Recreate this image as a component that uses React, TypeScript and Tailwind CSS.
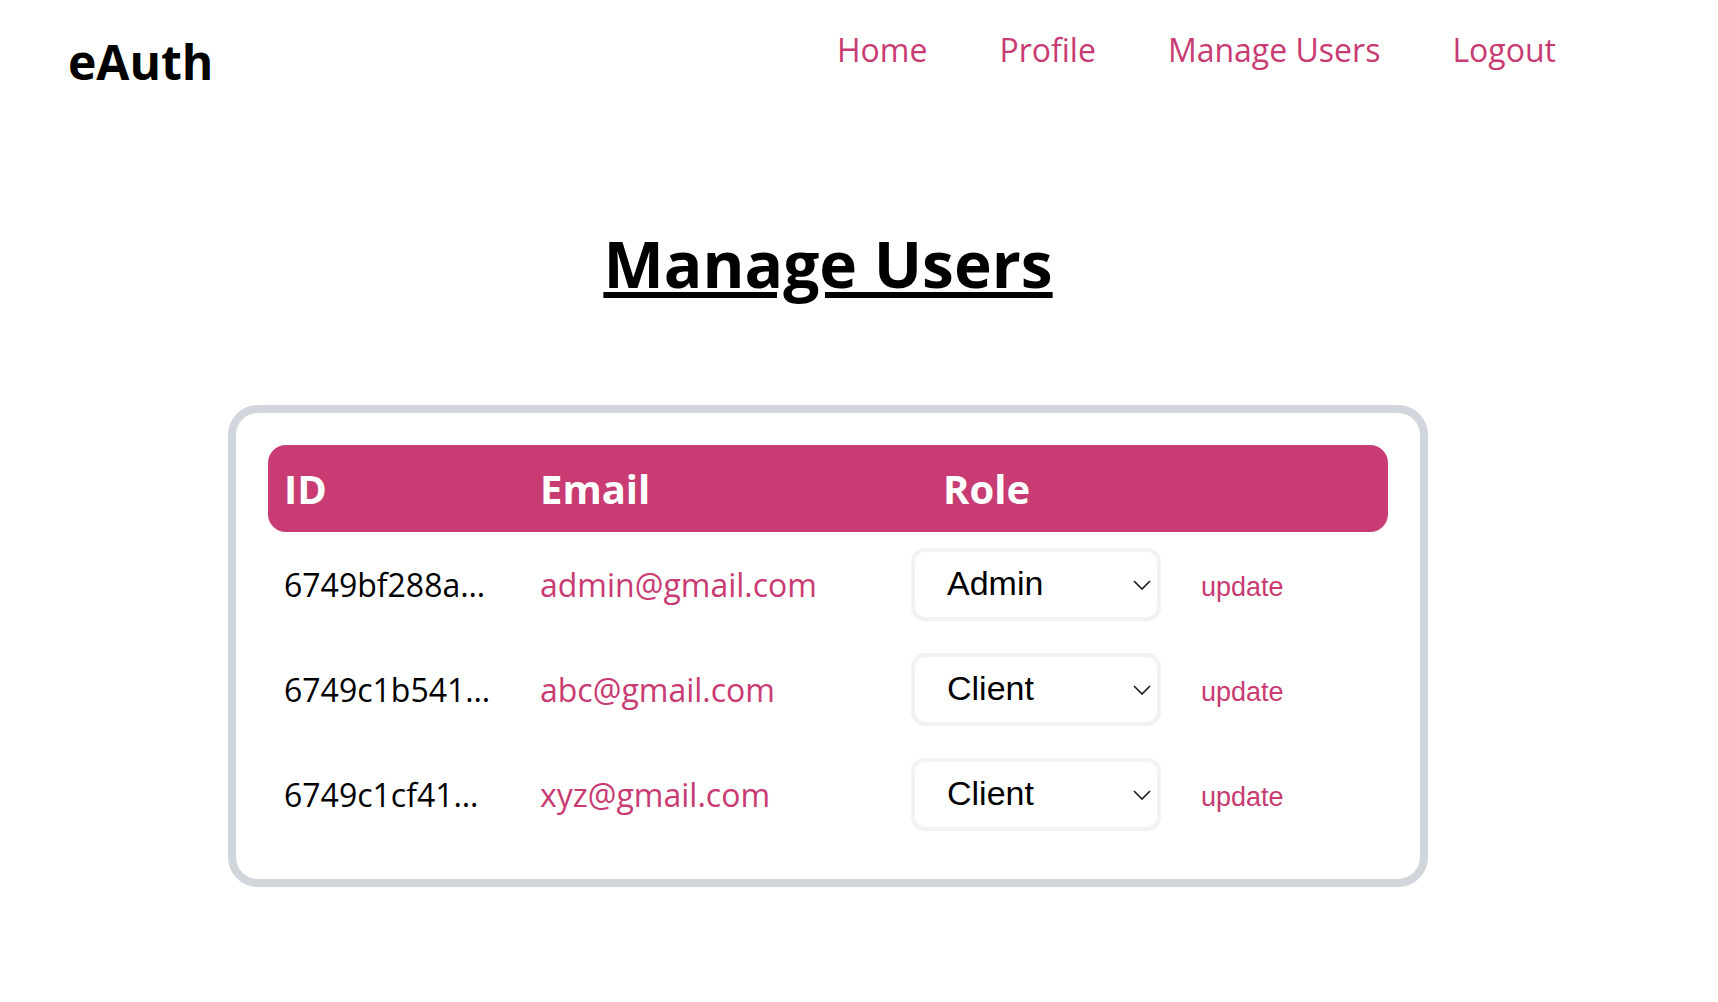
import { useState } from "react";

type User = { id: string; email: string; role: string };

const initialUsers: User[] = [
  { id: "6749bf288a…", email: "admin@gmail.com", role: "Admin" },
  { id: "6749c1b541…", email: "abc@gmail.com", role: "Client" },
  { id: "6749c1cf41…", email: "xyz@gmail.com", role: "Client" },
];

function RoleSelect({ value, onChange }: { value: string; onChange: (v: string) => void }) {
  return (
    <div className="relative h-[73px] w-[250px]">
      <select
        value={value}
        onChange={(e) => onChange(e.target.value)}
        className="h-full w-full appearance-none rounded-[14px] border-4 border-[#f1f2f4] bg-white pb-1 pl-[32px] font-['Liberation_Sans',Arial,sans-serif] text-[34px] text-black outline-none"
      >
        <option>Admin</option>
        <option>Client</option>
      </select>
      <svg
        className="pointer-events-none absolute right-[10px] top-1/2 -translate-y-1/2"
        width="18"
        height="10"
        viewBox="0 0 18 10"
        fill="none"
      >
        <polyline points="1,1 9,9 17,1" stroke="#1f1f1f" strokeWidth="1.7" />
      </svg>
    </div>
  );
}

export default function App() {
  const [users, setUsers] = useState(initialUsers);

  const setRole = (i: number, role: string) => {
    setUsers((prev) => prev.map((u, j) => (j === i ? { ...u, role } : u)));
  };

  return (
    <div className="min-h-screen bg-white font-['Open_Sans',sans-serif] text-black">
      <header className="flex items-start justify-between pl-[68px] pr-[162px] pt-[34px]">
        <h1 className="mt-[4px] text-[48px] font-bold leading-none">eAuth</h1>
        <nav className="flex gap-[72px] text-[32px] leading-none text-[#c83b73]">
          <a href="#">Home</a>
          <a href="#">Profile</a>
          <a href="#">Manage Users</a>
          <a href="#">Logout</a>
        </nav>
      </header>

      <main className="pl-[228px]">
        <div className="w-[1200px]">
          <h2 className="mt-[146px] text-center text-[64px] font-bold leading-none underline">
            Manage Users
          </h2>

          <div className="mt-[109px] rounded-[30px] border-8 border-gray-300 p-8">
            <div className="grid h-[87px] grid-cols-[256px_403px_1fr] items-center rounded-[18px] bg-[#c83b73] text-[40px] font-bold leading-none text-white">
              <div className="pl-4">ID</div>
              <div className="pl-4">Email</div>
              <div className="pl-4">Role</div>
            </div>

            {users.map((u, i) => (
              <div
                key={u.id}
                className="grid h-[105px] grid-cols-[256px_387px_250px_1fr] items-center text-[32px] leading-none"
              >
                <div className="pl-4">{u.id}</div>
                <div className="pl-4 text-[#c83b73]">{u.email}</div>
                <RoleSelect value={u.role} onChange={(v) => setRole(i, v)} />
                <div className="pl-[40px]">
                  <button className="font-['Liberation_Sans',Arial,sans-serif] text-[27px] leading-none text-[#c83b73]">
                    update
                  </button>
                </div>
              </div>
            ))}
          </div>
        </div>
      </main>
    </div>
  );
}
